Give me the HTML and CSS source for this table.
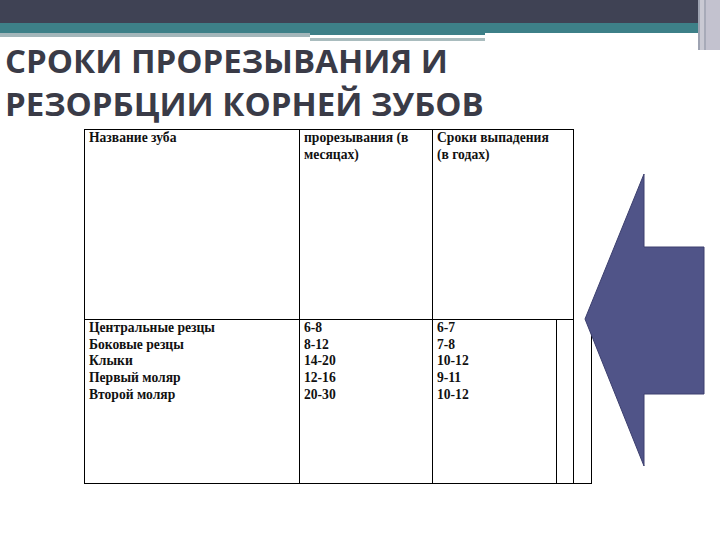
FILE: index.html
```html
<!DOCTYPE html>
<html lang="ru">
<head>
<meta charset="utf-8">
<link rel="stylesheet" href="styles.css">
</head>
<body>
<div class="slide">
  <header class="bands">
    <div class="band-dark"></div>
    <div class="band-teal"></div>
    <div class="band-rule">
      <div class="rule-left"></div>
      <div class="rule-right"></div>
    </div>
    <div class="side-stripes"></div>
  </header>
  <h1 class="title">СРОКИ ПРОРЕЗЫВАНИЯ И<br>РЕЗОРБЦИИ КОРНЕЙ ЗУБОВ</h1>
  <table class="teeth">
    <colgroup>
      <col class="c1"><col class="c2"><col class="c3"><col class="c4"><col class="c5">
    </colgroup>
    <tr class="head">
      <td>Название зуба</td>
      <td>прорезывания (в<br>месяцах)</td>
      <td colspan="2">Сроки выпадения<br>(в годах)</td>
      <td class="blank"></td>
    </tr>
    <tr class="body">
      <td>Центральные резцы<br>Боковые резцы<br>Клыки<br>Первый моляр<br>Второй моляр</td>
      <td>6-8<br>8-12<br>14-20<br>12-16<br>20-30</td>
      <td>6-7<br>7-8<br>10-12<br>9-11<br>10-12</td>
      <td></td>
      <td class="open-top"></td>
    </tr>
  </table>
  <svg class="arrow" width="124" height="296" viewBox="0 0 124 296">
    <polygon points="1,145 60,0 60,73 120,73 120,220 60,220 60,292" fill="#505488" stroke="#3c3f6e" stroke-width="1"/>
  </svg>
</div>
</body>
</html>
```
FILE: styles.css
```css
html, body {
  margin: 0;
  padding: 0;
  background: #ffffff;
}
.slide {
  position: relative;
  width: 720px;
  height: 540px;
  overflow: hidden;
}
.bands {
  position: relative;
  height: 42px;
}
.band-dark {
  height: 23px;
  background: #3f4254;
}
.band-teal {
  height: 10px;
  background: #3d8088;
}
.band-rule {
  display: flex;
  height: 9px;
}
.rule-left {
  width: 310px;
  height: 4px;
  background: #a3b6ba;
}
.rule-right {
  width: 175px;
  height: 9px;
  background: linear-gradient(#3d8088 0 2px, #ffffff 2px 5px, #a9bcbe 5px 8px, transparent 8px);
}
.side-stripes {
  position: absolute;
  top: 0;
  right: 0;
  width: 22px;
  height: 50px;
  background: linear-gradient(90deg, #9ea3b2 0 2px, #c9c9d3 2px 6px, #a7aab8 6px 8px, #c3c2cf 8px);
}
.title {
  margin: -3px 0 0 5px;
  font-family: "Open Sans", "DejaVu Sans", sans-serif;
  font-weight: 700;
  font-size: 33px;
  line-height: 43px;
  color: #3a3b47;
  letter-spacing: 0;
}
.teeth {
  margin: 4px 0 0 84px;
  border-collapse: collapse;
  font-family: "Liberation Serif", "Times New Roman", serif;
  font-weight: bold;
  font-size: 13.6px;
  line-height: 16.7px;
  color: #111111;
}
.c1 { width: 215px; }
.c2 { width: 133px; }
.c3 { width: 124px; }
.c4 { width: 17px; }
.c5 { width: 18px; }
.teeth td {
  border: 1px solid #000000;
  vertical-align: top;
  padding: 0 4px 1px;
  white-space: nowrap;
}
.teeth .head td { height: 188px; }
.teeth .body td { height: 162px; }
.teeth td.blank { border: none; }
.teeth td.open-top { border-top: none; }
.arrow {
  position: absolute;
  left: 584px;
  top: 174px;
}
```
